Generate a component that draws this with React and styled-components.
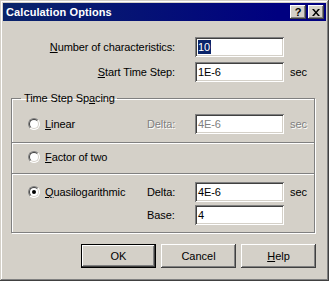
import React from "react";
import styled, { createGlobalStyle, css } from "styled-components";

const GlobalStyle = createGlobalStyle`
  html, body {
    margin: 0;
    padding: 0;
    background: #d4d0c8;
  }
  body {
    font-family: "Liberation Sans", Arial, sans-serif;
    font-size: 11px;
    color: #000;
  }
`;

const Window = styled.div`
  box-sizing: border-box;
  width: 329px;
  height: 281px;
  padding: 3px;
  background: #d4d0c8;
  display: flex;
  flex-direction: column;
  box-shadow: inset -1px -1px #404040, inset 1px 1px #d4d0c8,
    inset -2px -2px #808080, inset 2px 2px #fff;
`;

const TitleBar = styled.div`
  height: 18px;
  display: flex;
  align-items: center;
  padding: 0 2px 0 3px;
  background: linear-gradient(to right, #0a246a, #000080 85%);
  color: #fff;
`;

const Title = styled.span`
  flex: 1;
  font-weight: bold;
  font-size: 11px;
  letter-spacing: 0.1px;
`;

const CaptionButton = styled.button`
  box-sizing: border-box;
  width: 16px;
  height: 14px;
  padding: 0;
  margin-left: ${(p) => (p.$gap ? "2px" : "0")};
  border: none;
  background: #d4d0c8;
  color: #000;
  display: flex;
  align-items: center;
  justify-content: center;
  font-family: "Liberation Sans", Arial, sans-serif;
  font-weight: bold;
  font-size: 11px;
  box-shadow: inset -1px -1px #404040, inset 1px 1px #fff,
    inset -2px -2px #808080;
`;

const Body = styled.div`
  flex: 1;
  display: flex;
  flex-direction: column;
  padding: 16px 11px 0 8px;
  letter-spacing: -0.1px;
`;

const TopForm = styled.div`
  display: grid;
  grid-template-columns: 184px 95px auto;
  grid-auto-rows: 20px;
  row-gap: 5px;
  align-items: center;
`;

const FieldLabel = styled.label`
  white-space: nowrap;
  text-align: ${(p) => (p.$right ? "right" : "left")};
  padding-right: ${(p) => (p.$right ? "20px" : "0")};
  ${(p) =>
    p.$disabled &&
    css`
      color: #808080;
      text-shadow: 1px 1px #fff;
    `}
`;

const Unit = styled.span`
  ${(p) =>
    p.$disabled &&
    css`
      color: #808080;
      text-shadow: 1px 1px #fff;
    `}
`;

const Edit = styled.div`
  box-sizing: border-box;
  width: 89px;
  height: 20px;
  padding: 0 1px 0 3px;
  display: flex;
  align-items: center;
  background: #fff;
  color: ${(p) => (p.$disabled ? "#808080" : "#000")};
  white-space: nowrap;
  box-shadow: inset 1px 1px #808080, inset -1px -1px #fff,
    inset 2px 2px #404040, inset -2px -2px #d4d0c8;
`;

const Selected = styled.span`
  background: #0a246a;
  color: #fff;
  line-height: 14px;
  padding-right: 1px;
`;

const Key = styled.span`
  text-decoration: underline;
  text-underline-offset: 1px;
`;

const Group = styled.fieldset`
  margin: 10px 0 0;
  padding: 0;
  border: 1px solid #808080;
  box-shadow: inset 1px 1px #fff, 1px 1px #fff;
  min-width: 0;
`;

const Legend = styled.legend`
  margin-left: 9px;
  padding: 0 2px 0 3px;
  line-height: 13px;
`;

const OptionRow = styled.div`
  display: grid;
  grid-template-columns: 119px 48px 95px auto;
  grid-auto-rows: 20px;
  row-gap: 3px;
  align-items: center;
  padding: ${(p) => p.$pad};
  padding-left: 16px;
  ${(p) =>
    p.$divided &&
    css`
      border-top: 1px solid #808080;
      box-shadow: inset 0 1px #fff;
    `}
`;

const RadioLabel = styled.label`
  display: flex;
  align-items: center;
  gap: 5px;
  white-space: nowrap;
`;

const RadioDot = styled.span`
  box-sizing: border-box;
  width: 12px;
  height: 12px;
  border-radius: 50%;
  background: #fff;
  border: 1px solid;
  border-color: #808080 #fff #fff #808080;
  display: flex;
  align-items: center;
  justify-content: center;
  position: relative;
  &::before {
    content: "";
    position: absolute;
    inset: 0;
    border-radius: 50%;
    border: 1px solid;
    border-color: #404040 #d4d0c8 #d4d0c8 #404040;
  }
  &::after {
    content: "";
    width: 4px;
    height: 4px;
    border-radius: 50%;
    background: #000;
    display: ${(p) => (p.$checked ? "block" : "none")};
  }
`;

const ButtonRow = styled.div`
  display: flex;
  justify-content: flex-end;
  gap: 5px;
  margin: 11px -1px 0 0;
`;

const PushButton = styled.button`
  box-sizing: border-box;
  width: 75px;
  height: 24px;
  padding: 0;
  border: none;
  background: #d4d0c8;
  color: #000;
  font-family: "Liberation Sans", Arial, sans-serif;
  font-size: 11px;
  box-shadow: ${(p) =>
    p.$default
      ? "inset 0 0 0 1px #000, inset -2px -2px #404040, inset 2px 2px #fff, inset -3px -3px #808080"
      : "inset -1px -1px #404040, inset 1px 1px #fff, inset -2px -2px #808080"};
`;

const Radio = ({ checked, children }) => (
  <RadioLabel>
    <RadioDot $checked={checked} />
    <span>{children}</span>
  </RadioLabel>
);

const App = () => (
  <>
    <GlobalStyle />
    <Window>
      <TitleBar>
        <Title>Calculation Options</Title>
        <CaptionButton>?</CaptionButton>
        <CaptionButton $gap>
          <svg width="8" height="7" viewBox="0 0 8 7">
            <path
              d="M0 0h2l2 2.5L6 0h2L5 3.5 8 7H6L4 4.5 2 7H0l3-3.5z"
              fill="#000"
            />
          </svg>
        </CaptionButton>
      </TitleBar>
      <Body>
        <TopForm>
          <FieldLabel $right>
            <Key>N</Key>umber of characteristics:
          </FieldLabel>
          <Edit>
            <Selected>10</Selected>
          </Edit>
          <span />
          <FieldLabel $right>
            <Key>S</Key>tart Time Step:
          </FieldLabel>
          <Edit>1E-6</Edit>
          <Unit>sec</Unit>
        </TopForm>

        <Group>
          <Legend>
            Time Step Sp<Key>a</Key>cing
          </Legend>
          <OptionRow $pad="9px 0 8px">
            <Radio>
              <Key>L</Key>inear
            </Radio>
            <FieldLabel $disabled>Delta:</FieldLabel>
            <Edit $disabled>4E-6</Edit>
            <Unit $disabled>sec</Unit>
          </OptionRow>
          <OptionRow $divided $pad="4px 0 6px">
            <Radio>
              <Key>F</Key>actor of two
            </Radio>
          </OptionRow>
          <OptionRow $divided $pad="8px 0 7px">
            <Radio checked>
              <Key>Q</Key>uasilogarithmic
            </Radio>
            <FieldLabel>Delta:</FieldLabel>
            <Edit>4E-6</Edit>
            <Unit>sec</Unit>
            <span />
            <FieldLabel>Base:</FieldLabel>
            <Edit>4</Edit>
          </OptionRow>
        </Group>

        <ButtonRow>
          <PushButton $default>OK</PushButton>
          <PushButton>Cancel</PushButton>
          <PushButton>
            <Key>H</Key>elp
          </PushButton>
        </ButtonRow>
      </Body>
    </Window>
  </>
);

export default App;
